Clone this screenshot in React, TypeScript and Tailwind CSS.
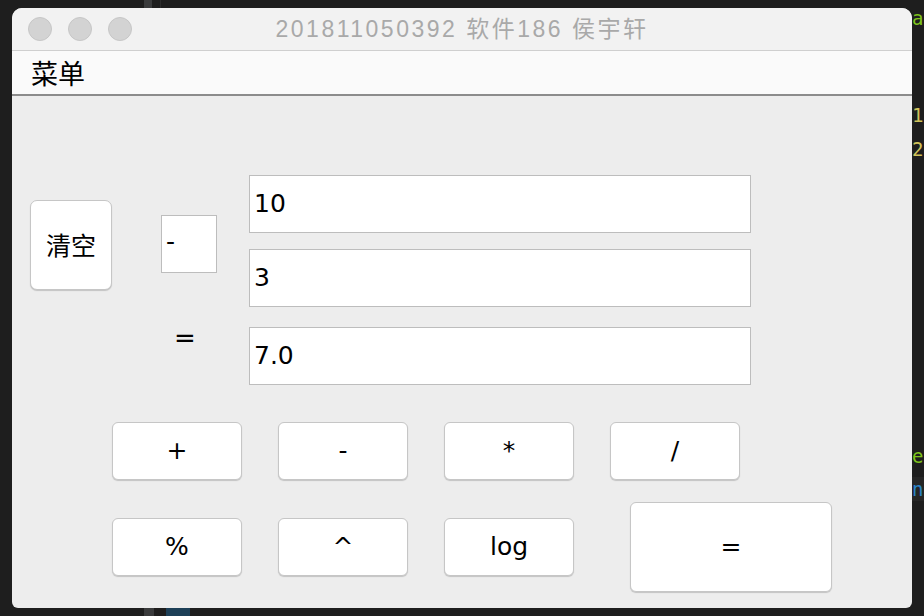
import React from 'react';

const ui = { fontFamily: '"DejaVu Sans", "Noto Sans CJK SC", sans-serif' };
const cjk = { fontFamily: '"Noto Sans CJK SC", "DejaVu Sans", sans-serif' };
const mono = { fontFamily: '"DejaVu Sans Mono", monospace' };

function Btn({ label, className }: { label: string; className: string }) {
  return (
    <button
      className={`bg-white border border-[#c6c6c6] rounded-[6px] shadow-[0_1px_1px_rgba(0,0,0,0.18)] text-[25px] text-black flex items-center justify-center ${className}`}
      style={ui}
    >
      {label}
    </button>
  );
}

function Field({ value, className }: { value: string; className?: string }) {
  return (
    <div
      className={`w-[502px] h-[58px] bg-white border border-[#bdbdbd] flex items-center pl-[4px] text-[25px] text-black ${className ?? ''}`}
      style={ui}
    >
      {value}
    </div>
  );
}

export default function App() {
  return (
    <div className="w-[924px] h-[616px] bg-[#1e1e1e] overflow-hidden flex flex-col">
      {/* strip above the window */}
      <div className="h-[8px] flex">
        <div className="ml-[144px] w-[8px] bg-[#3a3b3c]" />
        <div className="ml-[8px] w-px bg-[#2c2c2c]" />
      </div>

      <div className="h-[600px] flex">
        <div className="w-[12px]" />

        {/* window */}
        <div className="w-[900px] h-[600px] rounded-t-[10px] rounded-b-[6px] overflow-hidden flex flex-col bg-[#ededed]">
          {/* title bar */}
          <div className="h-[42px] bg-[#f2f2f2] grid grid-cols-[1fr_auto_1fr] items-center border-b border-[#cfcfcf] box-content">
            <div className="flex gap-4 pl-4">
              <span className="w-6 h-6 rounded-full bg-[#d3d3d3] border border-[#c6c6c6]" />
              <span className="w-6 h-6 rounded-full bg-[#d3d3d3] border border-[#c6c6c6]" />
              <span className="w-6 h-6 rounded-full bg-[#d3d3d3] border border-[#c6c6c6]" />
            </div>
            <div
              className="text-[23px] tracking-[2.5px] text-[#a9a9a9] leading-none"
              style={{ fontFamily: '"Liberation Sans", "Noto Sans CJK SC", sans-serif' }}
            >
              201811050392 软件186 侯宇轩
            </div>
            <div />
          </div>

          {/* menu bar */}
          <div className="h-[43px] bg-[#fafafa] border-b-2 border-[#8c8c8c] box-content flex items-center pl-[19px]">
            <span className="text-[27px] text-black leading-none" style={cjk}>
              菜单
            </span>
          </div>

          {/* content */}
          <div className="flex-1 flex flex-col">
            <div className="flex items-start pt-[79px] pl-[18px]">
              <button
                className="mt-[25px] w-[82px] h-[90px] bg-white border border-[#c6c6c6] rounded-[7px] shadow-[0_1px_1px_rgba(0,0,0,0.18)] text-[25px] text-black flex items-center justify-center"
                style={cjk}
              >
                清空
              </button>

              <div className="ml-[49px] mt-[40px] flex flex-col">
                <div
                  className="w-[56px] h-[58px] bg-white border border-[#bdbdbd] flex items-center pl-[4px] pb-[4px] text-[25px] text-black"
                  style={ui}
                >
                  -
                </div>
                <div className="mt-[50px] h-[30px] pl-[13px] text-[26px] leading-[30px] text-black" style={ui}>
                  =
                </div>
              </div>

              <div className="ml-[32px] flex flex-col">
                <Field value="10" />
                <Field value="3" className="mt-[16px]" />
                <Field value="7.0" className="mt-[20px]" />
              </div>
            </div>

            <div className="mt-[37px] pl-[100px] flex gap-[36px]">
              <Btn label="+" className="w-[130px] h-[58px]" />
              <Btn label="-" className="w-[130px] h-[58px]" />
              <Btn label="*" className="w-[130px] h-[58px]" />
              <Btn label="/" className="w-[130px] h-[58px]" />
            </div>

            <div className="mt-[22px] pl-[100px] flex items-center gap-[36px]">
              <Btn label="%" className="w-[130px] h-[58px]" />
              <Btn label="^" className="w-[130px] h-[58px]" />
              <Btn label="log" className="w-[130px] h-[58px]" />
              <Btn label="=" className="ml-[20px] w-[202px] h-[90px]" />
            </div>
          </div>
        </div>

        {/* code editor peeking out on the right */}
        <div className="w-[12px] overflow-hidden flex flex-col text-[19px] leading-[20px]" style={mono}>
          <div className="h-[20px] text-[#7fc31c]">a</div>
          <div className="mt-[77px] h-[20px] text-[#cfc25a]">1</div>
          <div className="mt-[14px] h-[20px] text-[#cfc25a]">2</div>
          <div className="mt-[287px] h-[20px] text-[#7fc31c]">e</div>
          <div className="mt-[11px] h-[24px] bg-[#262626] flex items-center">
            <span className="text-[#2b82c6]">n</span>
          </div>
        </div>
      </div>

      {/* strip below the window */}
      <div className="h-[8px] flex">
        <div className="ml-[144px] w-[10px] bg-[#3a3b3c]" />
        <div className="ml-[12px] w-[24px] bg-[#1d3f57]" />
      </div>
    </div>
  );
}
